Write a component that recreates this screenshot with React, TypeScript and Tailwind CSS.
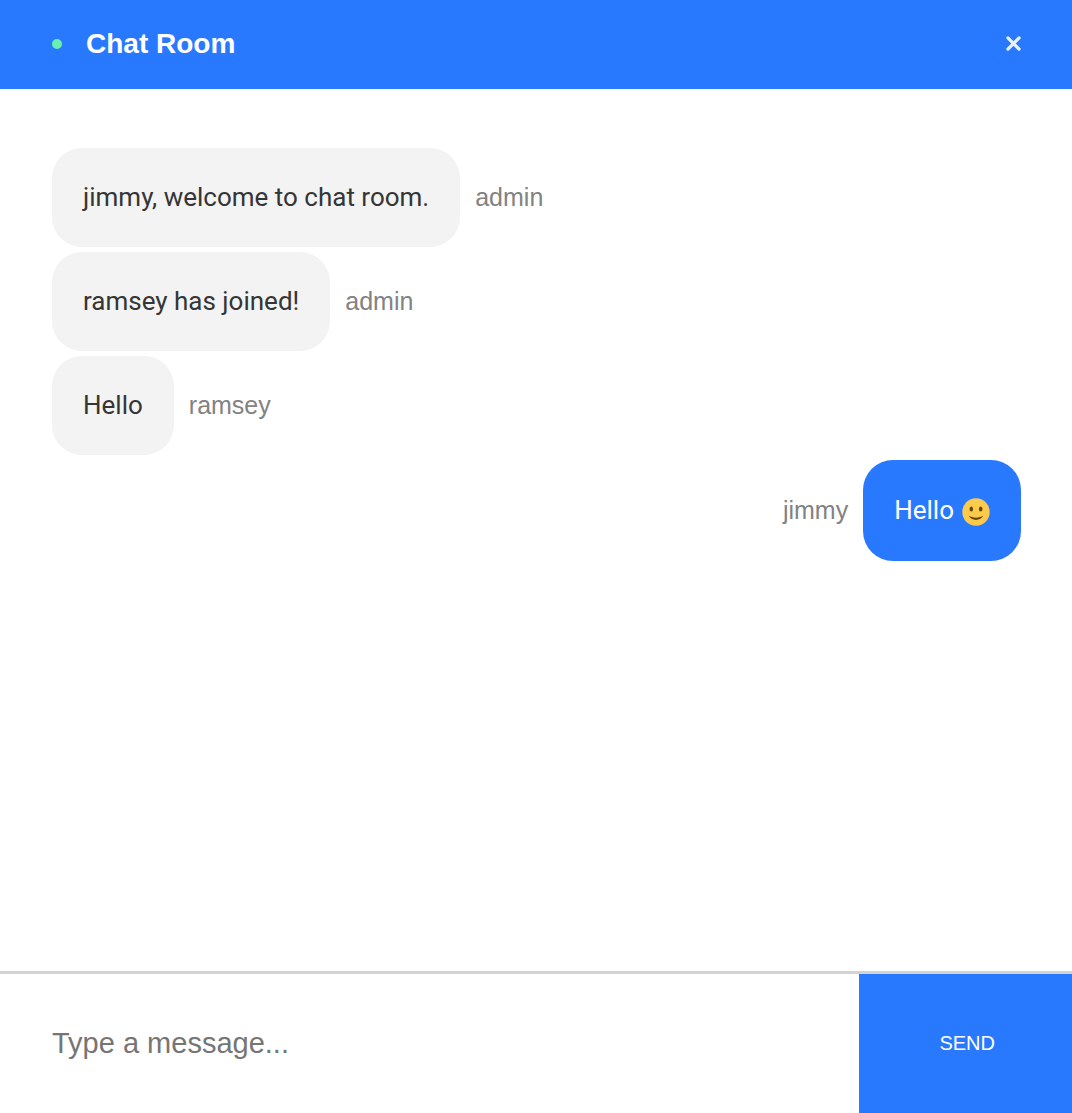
import React from "react";

type Message = { user: string; text: string; emoji?: boolean };

const me = "jimmy";
const messages: Message[] = [
  { user: "admin", text: "jimmy, welcome to chat room." },
  { user: "admin", text: "ramsey has joined!" },
  { user: "ramsey", text: "Hello" },
  { user: "jimmy", text: "Hello", emoji: true },
];

function Smiley() {
  return (
    <svg viewBox="0 0 28 28" className="ml-2 size-7 self-end" role="img" aria-label="slightly smiling face">
      <circle cx="14" cy="14" r="13.7" fill="#fdcb4c" />
      <ellipse cx="9.3" cy="11" rx="1.8" ry="2.5" fill="#664500" />
      <ellipse cx="18.7" cy="11" rx="1.8" ry="2.5" fill="#664500" />
      <path d="M6.800 17.600C10.500 20.300 17.500 20.300 21.200 17.600C19.500 23.300 8.500 23.300 6.800 17.600Z" fill="#664500" />
    </svg>
  );
}

function ChatMessage({ user, text, emoji }: Message) {
  const own = user === me;
  return (
    <li className={own ? "flex flex-row-reverse items-center gap-[15px]" : "flex items-center gap-[15px]"}>
      <p
        className={
          own
            ? "flex rounded-[30px] bg-[#2979ff] px-[31px] py-[35px] font-[Roboto,sans-serif] text-[26px] leading-[31px] text-white"
            : "flex rounded-[30px] bg-[#f3f3f3] px-[31px] py-[34px] font-[Roboto,sans-serif] text-[26px] leading-[31px] text-[#353535]"
        }
      >
        {text}
        {emoji && <Smiley />}
      </p>
      <span className="text-[25px] text-[#828282]">{user}</span>
    </li>
  );
}

export default function App() {
  return (
    <div className="flex min-h-screen flex-col bg-white font-['Liberation_Sans',Arial,sans-serif]">
      <header className="flex h-[89px] items-center justify-between bg-[#2979ff] pr-[51px] pb-0.5 pl-[52px] text-white">
        <div className="flex items-center gap-6">
          <span className="size-[10px] rounded-full bg-[#69f0ae]" />
          <h1 className="text-[28px] font-bold">Chat Room</h1>
        </div>
        <button type="button" aria-label="Leave room">
          <svg viewBox="0 0 14 14" className="size-[15px]" fill="none" stroke="#e6f3ff" strokeWidth="3" strokeLinecap="round">
            <path d="M1.800 1.800l10.400 10.400M12.200 1.800L1.800 12.200" />
          </svg>
        </button>
      </header>
      <ul className="flex flex-1 flex-col gap-[5px] pt-[59px] pr-[51px] pl-[52px]">
        {messages.map((m, i) => (
          <ChatMessage key={i} {...m} />
        ))}
      </ul>
      <form className="flex border-t-[3px] border-[#d3d3d3]" onSubmit={(e) => e.preventDefault()}>
        <input
          type="text"
          aria-label="Message"
          placeholder="Type a message..."
          className="h-[139px] min-w-0 flex-1 px-[52px] text-[29px] outline-none placeholder:text-[#757575]"
        />
        <button type="submit" className="bg-[#2979ff] pr-[77px] pl-20 pb-0.5 text-xl text-white">
          SEND
        </button>
      </form>
    </div>
  );
}
